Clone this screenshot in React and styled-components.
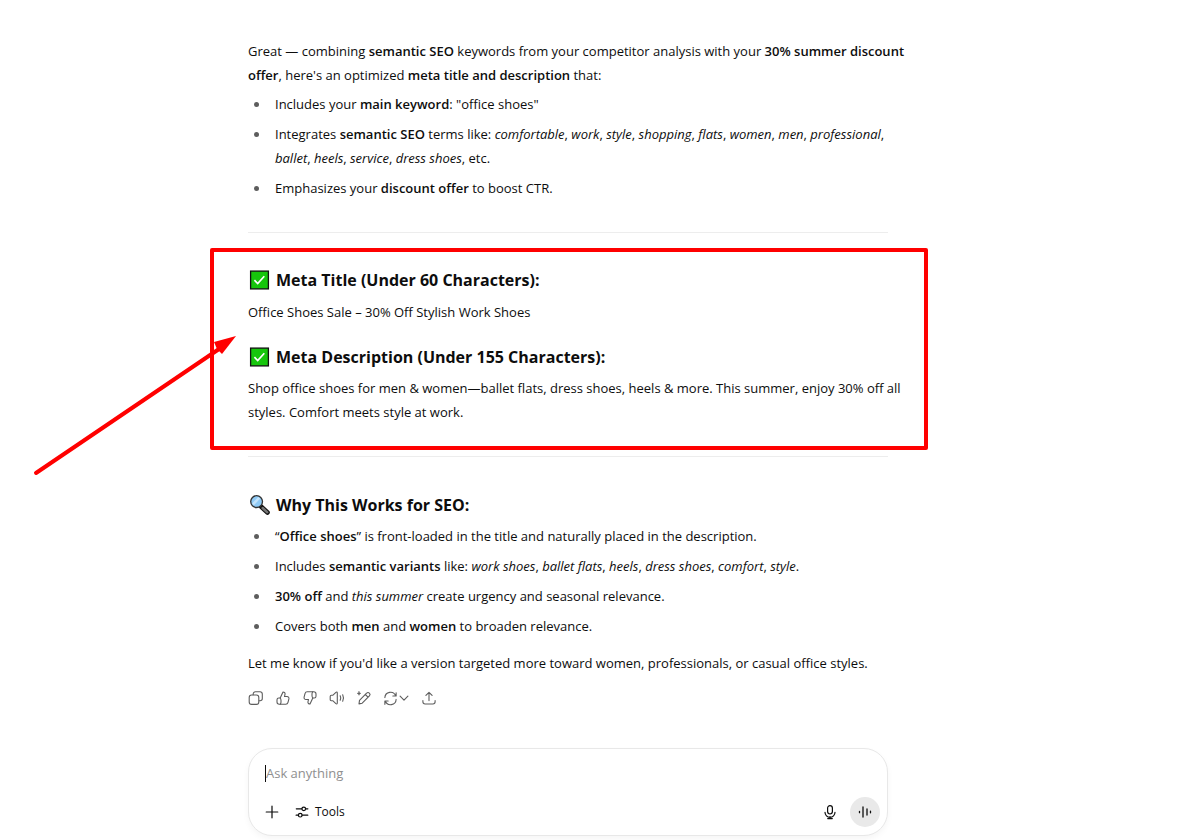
import React from "react";
import styled, { createGlobalStyle } from "styled-components";

const GlobalStyle = createGlobalStyle`
  * {
    box-sizing: border-box;
  }

  body {
    margin: 0;
    background: #ffffff;
    color: #0d0d0d;
    font-family: "Open Sans", "Noto Sans", sans-serif;
    font-size: 13px;
    line-height: 24px;
  }

  button,
  input {
    font: inherit;
    color: inherit;
  }
`;

const Page = styled.div`
  padding: 39px 51px 4px 0;
`;

const Column = styled.main`
  width: 100%;
  max-width: 640px;
  margin: 0 auto;
`;

const Paragraph = styled.p`
  margin: 0 -24px 0 0;
`;

const Closing = styled(Paragraph)`
  margin-top: 13px;
`;

const Strong = styled.strong`
  font-weight: 600;
`;

const List = styled.ul`
  display: flex;
  flex-direction: column;
  gap: 6px;
  margin: ${({ $top }) => $top}px 0 0;
  padding: 0;
  list-style: none;
`;

const Item = styled.li`
  display: flex;
  gap: 16px;
  padding-left: 6px;

  &::before {
    content: "";
    flex: none;
    width: 5px;
    height: 5px;
    margin-top: 10px;
    border-radius: 50%;
    background: #5d5d5d;
  }
`;

const Divider = styled.hr`
  height: 1px;
  margin: 32px 0 ${({ $bottom }) => $bottom}px;
  border: 0;
  background: #ededed;
`;

const Heading = styled.h3`
  display: flex;
  align-items: center;
  gap: 5px;
  margin: ${({ $top = 0 }) => $top}px 0 ${({ $bottom = 7 }) => $bottom}px;
  font-size: 16px;
  font-weight: 700;
  line-height: 24px;

  svg {
    flex: none;
  }
`;

const Highlighted = styled.section`
  position: relative;
`;

const Frame = styled.div`
  position: absolute;
  inset: -20px -40px -26px -38px;
  border: 4px solid #ff0000;
  border-radius: 2px;
  pointer-events: none;
`;

const Arrow = styled.svg`
  position: absolute;
  top: 66px;
  left: -216px;
  pointer-events: none;
`;

const Actions = styled.div`
  display: flex;
  align-items: center;
  gap: 11px;
  margin-top: 11px;
  color: #5d5d5d;
`;

const ActionButton = styled.button`
  display: flex;
  align-items: center;
  height: 24px;
  padding: 0;
  border: 0;
  background: none;
  cursor: pointer;
`;

const Composer = styled.form`
  display: flex;
  flex-direction: column;
  gap: 12px;
  margin-top: 38px;
  padding: 12px 7px 8px 16px;
  border: 1px solid #e8e8e8;
  border-radius: 24px;
  background: #ffffff;
  box-shadow: 0 3px 6px rgba(0, 0, 0, 0.04);
`;

const Prompt = styled.label`
  display: flex;
  align-items: center;
  height: 24px;
`;

const Caret = styled.span`
  width: 1px;
  height: 17px;
  background: #0d0d0d;
`;

const PromptInput = styled.input`
  flex: 1;
  min-width: 0;
  padding: 0;
  border: 0;
  outline: 0;
  background: none;

  &::placeholder {
    color: #8f8f8f;
    opacity: 1;
  }
`;

const Toolbar = styled.div`
  display: flex;
  align-items: center;
  justify-content: space-between;
`;

const Group = styled.div`
  display: flex;
  align-items: center;
  gap: ${({ $gap }) => $gap}px;
`;

const ToolButton = styled.button`
  display: flex;
  align-items: center;
  gap: 6px;
  padding: 0;
  border: 0;
  background: none;
  font-size: 12px;
  cursor: pointer;
`;

const VoiceButton = styled(ToolButton)`
  justify-content: center;
  width: 30px;
  height: 30px;
  border-radius: 50%;
  background: #e9e9e9;
`;

const Icon = ({ size = 16, width = 1.1, children }) => (
  <svg
    width={size}
    height={size}
    viewBox="0 0 16 16"
    fill="none"
    stroke="currentColor"
    strokeWidth={width}
    strokeLinecap="round"
    strokeLinejoin="round"
    aria-hidden="true"
  >
    {children}
  </svg>
);

const CheckMark = () => (
  <svg width="23" height="22" viewBox="0 0 23 22" aria-hidden="true">
    <rect x="2.6" y="2.1" width="17.8" height="17.8" fill="#16c60c" stroke="#111" strokeWidth="1.3" />
    <path d="M6.4 11.2l3.3 3.3 6.6-7.3" fill="none" stroke="#fff" strokeWidth="1.7" />
  </svg>
);

const Magnifier = () => (
  <svg width="23" height="22" viewBox="0 0 23 22" aria-hidden="true">
    <path d="M13 12.500l6.500 6" stroke="#111" strokeWidth="4.6" strokeLinecap="round" />
    <path d="M14.600 14l4.700 4.300" stroke="#767676" strokeWidth="2.4" strokeLinecap="round" />
    <circle cx="8.6" cy="7.6" r="5.9" fill="#8fcaf5" stroke="#333" strokeWidth="1.3" />
    <path d="M4.200 9.300l6-6.200 2 1.400-6.500 7z" fill="#c3e3fb" />
  </svg>
);

const CopyIcon = () => (
  <Icon>
    <rect x="1.2" y="5" width="9.6" height="9.4" rx="2.4" />
    <path d="M5.200 4.800V4a2.200 2.200 0 0 1 2.200-2.200h4.600A2.300 2.300 0 0 1 14.300 4v4.600a2.200 2.200 0 0 1-2.200 2.200h-1" />
  </Icon>
);

const ThumbPaths = () => (
  <>
    <path d="M5.2 8L8 2c1.5 0 2.3 1 2 2.3L9.5 6.5h2.5c1.4 0 2.2 1.1 1.9 2.4l-.9 3.5c-.3 1.1-1 1.8-2.2 1.8H4.3c-1.4 0-2.3-.8-2.3-2.2V9.8c0-1.1.7-1.8 1.8-1.8z" />
    <path d="M5.2 8c.6.7.8 1.4.8 2.5v1.5c0 .9-.2 1.6-.7 2.2" />
  </>
);

const ThumbUpIcon = () => (
  <Icon>
    <ThumbPaths />
  </Icon>
);

const ThumbDownIcon = () => (
  <Icon>
    <g transform="rotate(180 8 8)">
      <ThumbPaths />
    </g>
  </Icon>
);

const SpeakerIcon = () => (
  <Icon>
    <path d="M1.2 6.4c0-.7.4-1.1 1.1-1.1h1.4l3.2-3c.7-.6 1.4-.3 1.4.6v10.200c0 .9-.7 1.200-1.400.6l-3.200-3H2.300c-.7 0-1.100-.4-1.100-1.100z" />
    <path d="M11.2 5.8c.7 1.4.7 3 0 4.4M13.7 4.8c1 2.1 1 4.3 0 6.4" />
  </Icon>
);

const EditIcon = () => (
  <Icon>
    <path d="M3 13.9l.5-3.5 7.1-7.300a1.900 1.900 0 0 1 2.800 0 2 2 0 0 1 0 2.800l-7.200 7.300zM9.300 4.500L12 7.200" />
    <path d="M3 1.500l.5 1.400 1.400.5-1.400.5L3 5.300l-.5-1.400-1.400-.5 1.400-.5z" fill="currentColor" strokeWidth="0.5" />
  </Icon>
);

const RegenerateIcon = () => (
  <Icon size={15} width={1.2}>
    <path d="M2 7A6 6 0 0 1 13.500 5M14 1.800v3.500h-3.500M14 9A6 6 0 0 1 2.500 11M2 14.200v-3.500h3.500" />
  </Icon>
);

const ChevronIcon = () => (
  <Icon size={12} width={1.5}>
    <path d="M2.800 5.600L8 10.800l5.200-5.200" />
  </Icon>
);

const ShareIcon = () => (
  <Icon>
    <path d="M8 10.600V2.400M4.900 5.400L8 2.300l3.100 3.100M1.900 10.600v1.200c0 1.400.8 2.200 2.200 2.200h7.800c1.400 0 2.200-.8 2.200-2.200v-1.200" />
  </Icon>
);

const PlusIcon = () => (
  <Icon size={14} width={1.4}>
    <path d="M8 1.400v13.200M1.400 8h13.200" />
  </Icon>
);

const SlidersIcon = () => (
  <Icon size={14} width={1.4}>
    <path d="M1.500 4.400h6.300M12.200 4.400h2.500M1.300 11.600h2.500M8.200 11.600h6.400" />
    <circle cx="10" cy="4.4" r="2.1" />
    <circle cx="6" cy="11.6" r="2.1" />
  </Icon>
);

const MicIcon = () => (
  <Icon width={1.2}>
    <rect x="5.6" y="1.6" width="4.8" height="8.4" rx="2.4" />
    <path d="M3 8.300a5 5 0 0 0 10 0M8 12.600v2M5.700 14.600h4.600" />
  </Icon>
);

const VoiceIcon = () => (
  <Icon width={1.3}>
    <path d="M2.500 7.300v1.400M6 3v10M10 5v6M13.500 7.200v1.600" />
  </Icon>
);

const actions = [
  { label: "Copy", icon: <CopyIcon /> },
  { label: "Good response", icon: <ThumbUpIcon /> },
  { label: "Bad response", icon: <ThumbDownIcon /> },
  { label: "Read aloud", icon: <SpeakerIcon /> },
  { label: "Edit in canvas", icon: <EditIcon /> },
  {
    label: "Try again",
    icon: (
      <>
        <RegenerateIcon />
        <ChevronIcon />
      </>
    ),
  },
  { label: "Share", icon: <ShareIcon /> },
];

// comma separated run of italic keywords
const Terms = ({ words }) =>
  words.map((word, index) => (
    <React.Fragment key={word}>
      {index > 0 && ", "}
      <em>{word}</em>
    </React.Fragment>
  ));

const Answer = () => (
  <article>
    <Paragraph>
      Great — combining <Strong>semantic SEO</Strong> keywords from your
      competitor analysis with your <Strong>30% summer discount</Strong>{" "}
      <Strong>offer</Strong>, here's an optimized{" "}
      <Strong>meta title and description</Strong> that:
    </Paragraph>
    <List $top={5}>
      <Item>
        <span>
          Includes your <Strong>main keyword</Strong>: "office shoes"
        </span>
      </Item>
      <Item>
        <span>
          Integrates <Strong>semantic SEO</Strong> terms like:{" "}
          <Terms
            words={[
              "comfortable",
              "work",
              "style",
              "shopping",
              "flats",
              "women",
              "men",
              "professional",
              "ballet",
              "heels",
              "service",
              "dress shoes",
            ]}
          />
          , etc.
        </span>
      </Item>
      <Item>
        <span>
          Emphasizes your <Strong>discount offer</Strong> to boost CTR.
        </span>
      </Item>
    </List>
    <Divider $bottom={35} />
    <Highlighted>
      <Heading $bottom={8}>
        <CheckMark />
        Meta Title (Under 60 Characters):
      </Heading>
      <Paragraph>Office Shoes Sale – 30% Off Stylish Work Shoes</Paragraph>
      <Heading $top={21}>
        <CheckMark />
        Meta Description (Under 155 Characters):
      </Heading>
      <Paragraph>
        Shop office shoes for men &amp; women—ballet flats, dress shoes, heels
        &amp; more. This summer, enjoy 30% off all styles. Comfort meets style
        at work.
      </Paragraph>
      <Frame />
      <Arrow width="210" height="146" viewBox="0 0 210 146" aria-hidden="true">
        <path d="M4 139L190 13" stroke="#ff0000" strokeWidth="4" strokeLinecap="round" />
        <path d="M204 2L182 8L185 15L190 20Z" fill="#ff0000" />
      </Arrow>
    </Highlighted>
    <Divider $bottom={36} />
    <Heading>
      <Magnifier />
      Why This Works for SEO:
    </Heading>
    <List $top={0}>
      <Item>
        <span>
          “<Strong>Office shoes</Strong>” is front-loaded in the title and
          naturally placed in the description.
        </span>
      </Item>
      <Item>
        <span>
          Includes <Strong>semantic variants</Strong> like:{" "}
          <Terms
            words={[
              "work shoes",
              "ballet flats",
              "heels",
              "dress shoes",
              "comfort",
              "style",
            ]}
          />
          .
        </span>
      </Item>
      <Item>
        <span>
          <Strong>30% off</Strong> and <em>this summer</em> create urgency and
          seasonal relevance.
        </span>
      </Item>
      <Item>
        <span>
          Covers both <Strong>men</Strong> and <Strong>women</Strong> to broaden
          relevance.
        </span>
      </Item>
    </List>
    <Closing>
      Let me know if you'd like a version targeted more toward women,
      professionals, or casual office styles.
    </Closing>
  </article>
);

const App = () => (
  <>
    <GlobalStyle />
    <Page>
      <Column>
        <Answer />
        <Actions>
          {actions.map(({ label, icon }) => (
            <ActionButton key={label} type="button" aria-label={label}>
              {icon}
            </ActionButton>
          ))}
        </Actions>
        <Composer onSubmit={(event) => event.preventDefault()}>
          <Prompt>
            <Caret />
            <PromptInput type="text" placeholder="Ask anything" aria-label="Ask anything" />
          </Prompt>
          <Toolbar>
            <Group $gap={16}>
              <ToolButton type="button" aria-label="Add files">
                <PlusIcon />
              </ToolButton>
              <ToolButton type="button">
                <SlidersIcon />
                Tools
              </ToolButton>
            </Group>
            <Group $gap={12}>
              <ToolButton type="button" aria-label="Dictate">
                <MicIcon />
              </ToolButton>
              <VoiceButton type="button" aria-label="Use voice mode">
                <VoiceIcon />
              </VoiceButton>
            </Group>
          </Toolbar>
        </Composer>
      </Column>
    </Page>
  </>
);

export default App;
